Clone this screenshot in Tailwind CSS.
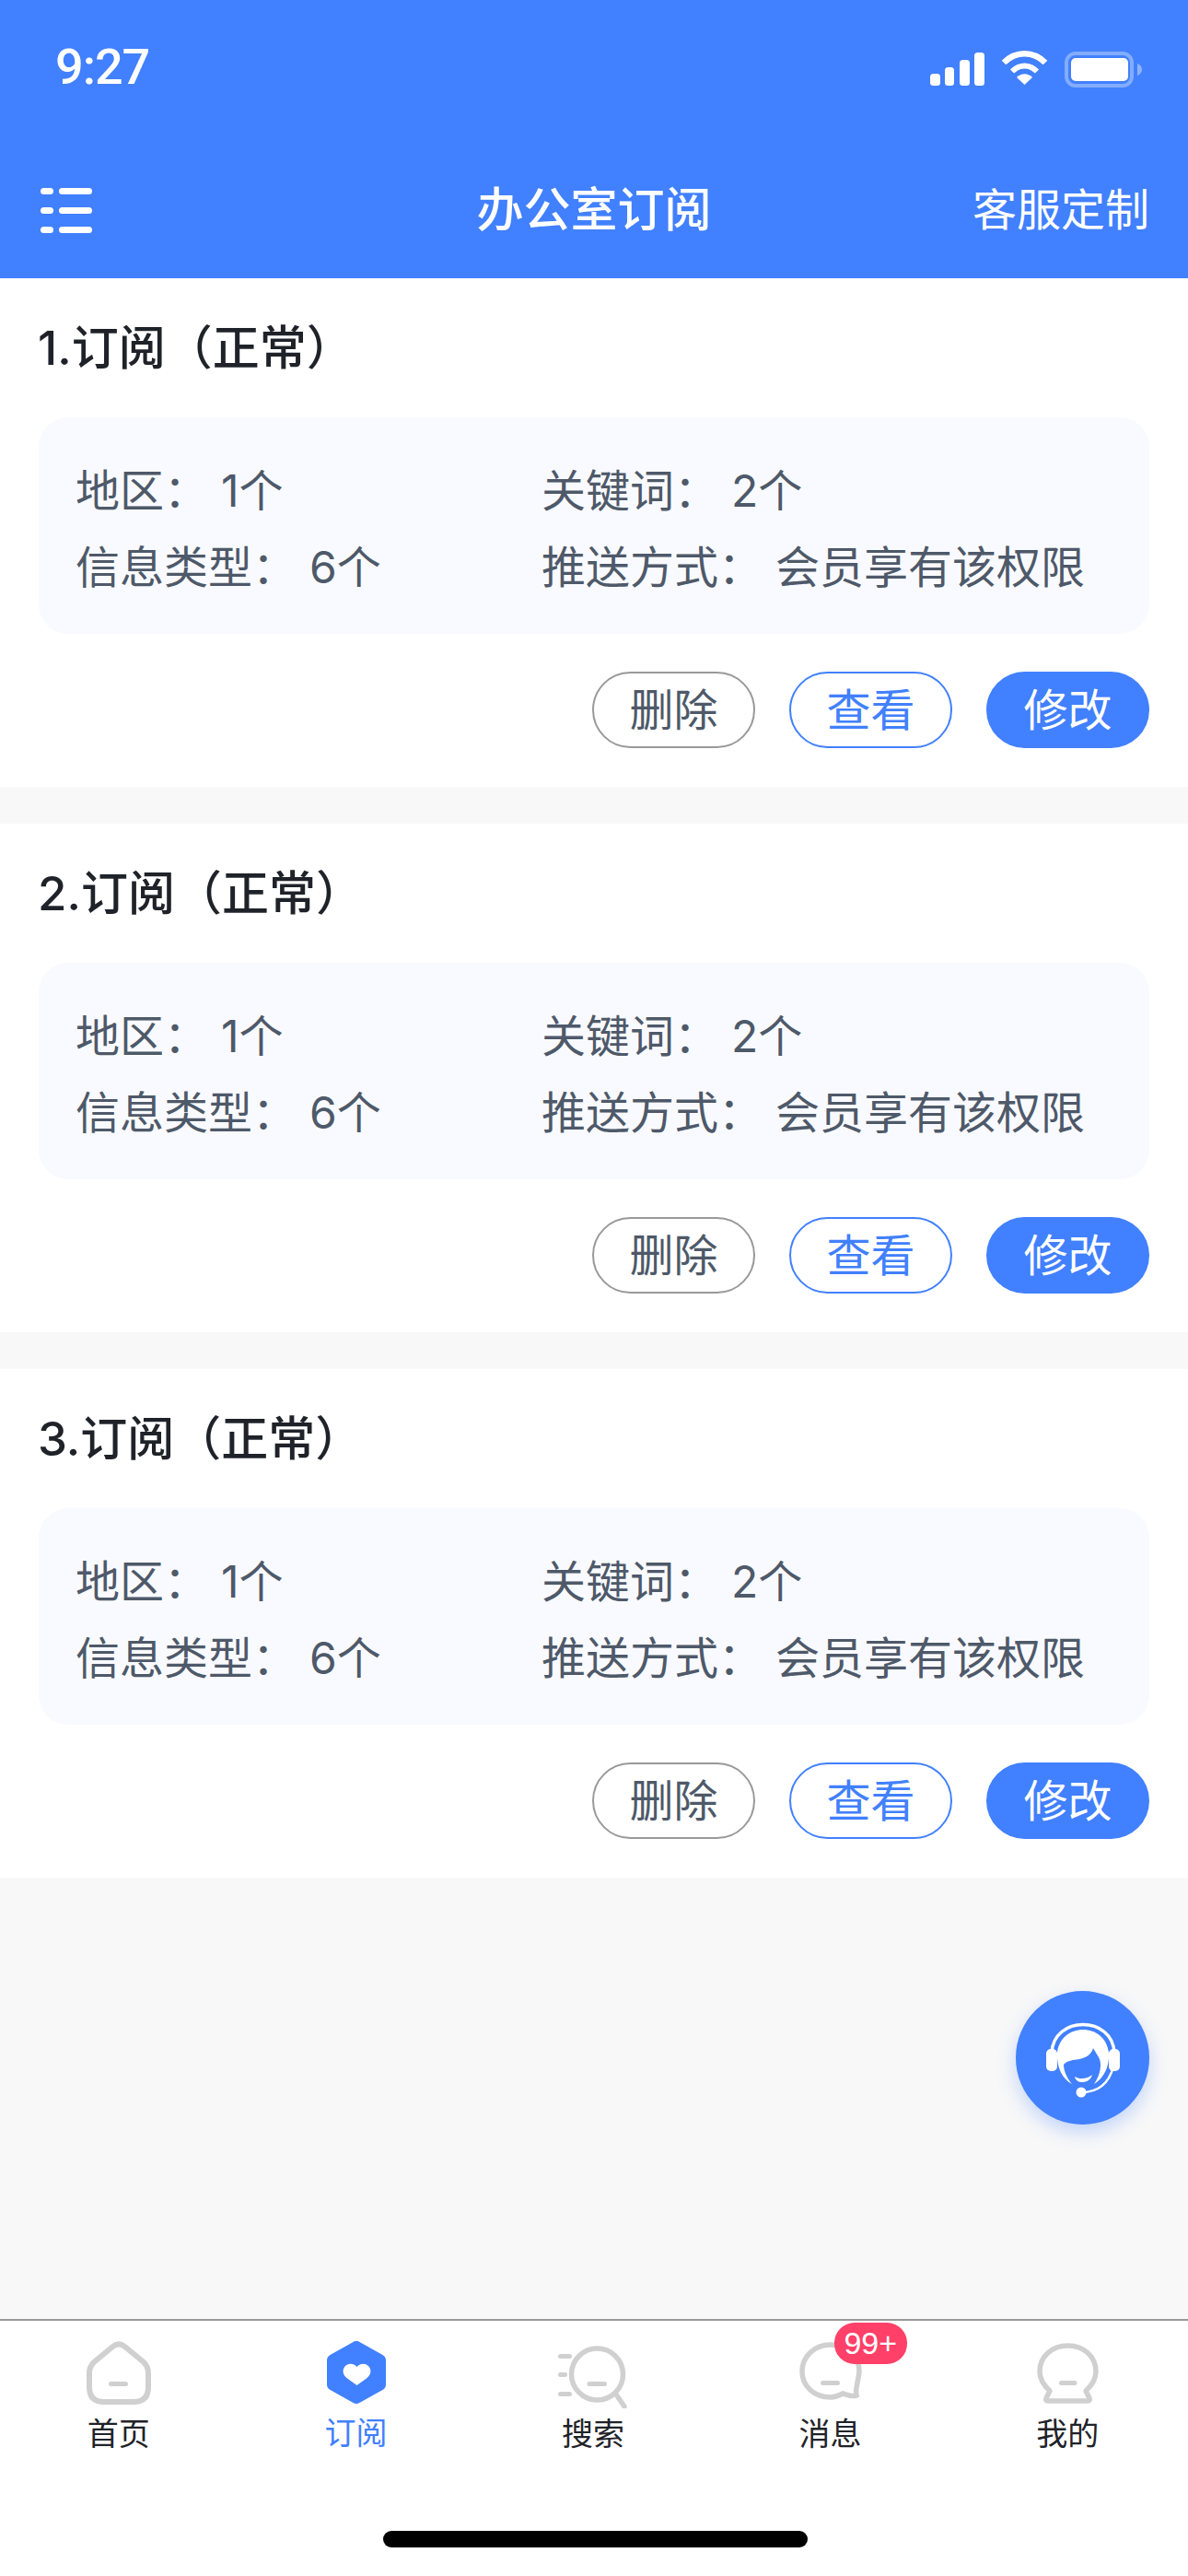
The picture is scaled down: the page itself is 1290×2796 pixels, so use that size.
<!DOCTYPE html>
<html lang="zh-CN">
<head>
  <meta charset="UTF-8">
  <meta name="viewport" content="width=device-width, initial-scale=1.0">
  <title>办公室订阅</title>
  <script src="https://cdn.jsdelivr.net/npm/@tailwindcss/browser@4"></script>
</head>
<body>
  <div class="relative flex h-[2796px] w-[1290px] flex-col overflow-hidden bg-[#f8f8f8] font-['Inter','Noto_Sans_CJK_SC',sans-serif]">

    <!-- Header -->
    <header class="flex h-[302px] flex-col bg-[#4180ff] text-white">
      <div class="flex h-[146px] items-start justify-between pt-[54px] pr-[50px] pl-[60px]">
        <span class="font-['Roboto',sans-serif] text-[54px] leading-[38px] font-medium tracking-[-1px]">9:27</span>
        <div class="flex items-start">
          <svg class="mt-[3px] h-[36px] w-[59px]" viewBox="0 0 59 36" fill="#fff">
            <rect x="0" y="23" width="11" height="13" rx="3.5"/>
            <rect x="16" y="16" width="10" height="20" rx="3.5"/>
            <rect x="32" y="8" width="11" height="28" rx="3.5"/>
            <rect x="48" y="0" width="11" height="36" rx="3.5"/>
          </svg>
          <svg class="ml-[17px] h-[38px] w-[53px]" viewBox="0 0 53 38" fill="none">
            <path d="M4 14C17 1 36 1 49 14" stroke="#fff" stroke-width="6.5"/>
            <path d="M13 23.5C21 15.5 32 15.5 40 23.5" stroke="#fff" stroke-width="6"/>
            <path d="M26.5 38L18 30C23 25 30 25 35 30Z" fill="#fff"/>
          </svg>
          <svg class="mt-[2px] ml-[17px] h-[39px] w-[84px]" viewBox="0 0 84 39" fill="none">
            <rect x="2" y="2" width="71" height="35" rx="10" stroke="#fff" stroke-opacity="0.35" stroke-width="4"/>
            <rect x="7" y="7" width="62" height="25" rx="5" fill="#fff"/>
            <path d="M79 13C82 14 84 16.5 84 19.5C84 22.5 82 25 79 26Z" fill="#fff" fill-opacity="0.4"/>
          </svg>
        </div>
      </div>
      <div class="grid grid-cols-[1fr_auto_1fr] items-center px-[44px] pt-[47px]">
        <div class="grid w-[56px] grid-cols-[14px_36px] gap-x-[6px] gap-y-[14px]">
          <span class="h-[7px] rounded-full bg-white"></span><span class="h-[7px] rounded-full bg-white"></span>
          <span class="h-[7px] rounded-full bg-white"></span><span class="h-[7px] rounded-full bg-white"></span>
          <span class="h-[7px] rounded-full bg-white"></span><span class="h-[7px] rounded-full bg-white"></span>
        </div>
        <h1 class="text-[51px] leading-[70px] font-medium">办公室订阅</h1>
        <a class="-mr-[2px] text-right text-[48px] leading-[70px]">客服定制</a>
      </div>
    </header>

    <!-- Subscription list -->
    <main class="flex flex-1 flex-col gap-[40px]">
      <section class="h-[552px] bg-white px-[42px] pt-[40px]">
        <h2 class="-ml-[1px] text-[51px] leading-[72px] font-medium text-[#1f2329]">1.订阅（正常）</h2>
        <div class="mt-[39px] grid h-[235px] grid-cols-[506px_1fr] content-center gap-y-[1px] rounded-[32px] bg-[#f9faff] px-[40px] pt-[8px] text-[48px] leading-[82px] text-[#4e5969]">
          <div>地区：<span class="ml-[14px]">1个</span></div>
          <div>关键词：<span class="ml-[14px]">2个</span></div>
          <div>信息类型：<span class="ml-[14px]">6个</span></div>
          <div>推送方式：<span class="ml-[14px]">会员享有该权限</span></div>
        </div>
        <div class="mt-[41px] flex justify-end gap-[37px] text-[48px]">
          <button class="h-[83px] w-[177px] rounded-full border-2 border-[#999999] text-[#4e5969]">删除</button>
          <button class="h-[83px] w-[177px] rounded-full border-2 border-[#4180ff] text-[#4180ff]">查看</button>
          <button class="h-[83px] w-[177px] rounded-full bg-[#4180ff] text-white">修改</button>
        </div>
      </section>

      <section class="h-[552px] bg-white px-[42px] pt-[40px]">
        <h2 class="-ml-[1px] text-[51px] leading-[72px] font-medium text-[#1f2329]">2.订阅（正常）</h2>
        <div class="mt-[39px] grid h-[235px] grid-cols-[506px_1fr] content-center gap-y-[1px] rounded-[32px] bg-[#f9faff] px-[40px] pt-[8px] text-[48px] leading-[82px] text-[#4e5969]">
          <div>地区：<span class="ml-[14px]">1个</span></div>
          <div>关键词：<span class="ml-[14px]">2个</span></div>
          <div>信息类型：<span class="ml-[14px]">6个</span></div>
          <div>推送方式：<span class="ml-[14px]">会员享有该权限</span></div>
        </div>
        <div class="mt-[41px] flex justify-end gap-[37px] text-[48px]">
          <button class="h-[83px] w-[177px] rounded-full border-2 border-[#999999] text-[#4e5969]">删除</button>
          <button class="h-[83px] w-[177px] rounded-full border-2 border-[#4180ff] text-[#4180ff]">查看</button>
          <button class="h-[83px] w-[177px] rounded-full bg-[#4180ff] text-white">修改</button>
        </div>
      </section>

      <section class="h-[552px] bg-white px-[42px] pt-[40px]">
        <h2 class="-ml-[1px] text-[51px] leading-[72px] font-medium text-[#1f2329]">3.订阅（正常）</h2>
        <div class="mt-[39px] grid h-[235px] grid-cols-[506px_1fr] content-center gap-y-[1px] rounded-[32px] bg-[#f9faff] px-[40px] pt-[8px] text-[48px] leading-[82px] text-[#4e5969]">
          <div>地区：<span class="ml-[14px]">1个</span></div>
          <div>关键词：<span class="ml-[14px]">2个</span></div>
          <div>信息类型：<span class="ml-[14px]">6个</span></div>
          <div>推送方式：<span class="ml-[14px]">会员享有该权限</span></div>
        </div>
        <div class="mt-[41px] flex justify-end gap-[37px] text-[48px]">
          <button class="h-[83px] w-[177px] rounded-full border-2 border-[#999999] text-[#4e5969]">删除</button>
          <button class="h-[83px] w-[177px] rounded-full border-2 border-[#4180ff] text-[#4180ff]">查看</button>
          <button class="h-[83px] w-[177px] rounded-full bg-[#4180ff] text-white">修改</button>
        </div>
      </section>
    </main>

    <!-- Floating customer service button -->
    <button class="absolute top-[2161px] left-[1103px] h-[145px] w-[145px] rounded-full bg-[#4180ff] shadow-[0_8px_20px_rgba(65,128,255,0.3)]">
      <svg class="h-full w-full" viewBox="23 21 145 145" fill="none">
        <path d="M62 88C63 68 79 57.5 96 57.5C113 57.5 129 68 130 88" stroke="#fff" stroke-width="3.5"/>
        <rect x="56" y="84" width="12" height="24" rx="5" fill="#fff"/>
        <rect x="124" y="84" width="12" height="24" rx="5" fill="#fff"/>
        <path d="M68 88C70 72 82 63 96 63C110 63 122 72 124 88C125 104 118 116 108 122C115 112 117 100 113 93C111 90 109 86 107 83C105 90 100 93 92 95C84 96 78 97 75 101C75 108 79 116 84 122C74 117 67 104 68 88Z" fill="#fff"/>
        <path d="M87 114C92 117 100 117 106 112C104 119 98 120 95 120C91 120 88 118 87 114Z" fill="#fff"/>
        <path d="M94 131C112 131 124 122 129 103" stroke="#fff" stroke-width="2.5"/>
        <circle cx="94" cy="131" r="5.5" fill="#fff"/>
      </svg>
    </button>

    <!-- Tab bar -->
    <nav class="relative h-[279px] border-t-2 border-[#999999] bg-white">
      <div class="grid grid-cols-5 pr-[2px] text-center text-[34px] leading-[50px] text-[#1f2329]">
        <a class="flex flex-col items-center">
          <div class="flex h-[107px] items-end pb-[16px]">
            <svg class="h-[69px] w-[70px]" viewBox="0 0 70 69" fill="none" stroke="#d0d0d0" stroke-width="6">
              <path d="M28.5 6Q35 .8 41.5 6L61 22Q67 27 67 35V50Q67 66 51 66H19Q3 66 3 50V35Q3 27 9 22Z"/>
              <rect x="24" y="44" width="21" height="5" rx="2.5" fill="#d0d0d0" stroke="none"/>
            </svg>
          </div>
          <span class="-mt-[9px]">首页</span>
        </a>
        <a class="flex flex-col items-center text-[#4180ff]">
          <div class="ml-[2px] flex h-[107px] items-end pb-[17px]">
            <svg class="h-[68px] w-[64px]" viewBox="0 0 64 68" fill="#4180ff">
              <path d="M32 7L57 21V47L32 61L7 47V21Z" stroke="#4180ff" stroke-width="14" stroke-linejoin="round"/>
              <path d="M32.5 48L22 40.5C17 36.5 17 32 18.5 29C20.5 24.5 28 22.5 32.5 28C37 22.5 44.5 24.5 46.5 29C48 32 48 36.5 43 40.5Z" fill="#fff"/>
            </svg>
          </div>
          <span class="-mt-[10px]">订阅</span>
        </a>
        <a class="flex flex-col items-center">
          <div class="flex h-[107px] items-end pb-[12px]">
            <svg class="h-[68px] w-[75px]" viewBox="0 0 75 68" fill="none" stroke="#d0d0d0" stroke-width="5.5">
              <circle cx="42.5" cy="31" r="28"/>
              <path d="M63 53L72 66" stroke-linecap="round"/>
              <rect x="0" y="9" width="15" height="5" rx="2.5" fill="#d0d0d0" stroke="none"/>
              <rect x="0" y="29" width="10" height="5" rx="2.5" fill="#d0d0d0" stroke="none"/>
              <rect x="0" y="50" width="15" height="5" rx="2.5" fill="#d0d0d0" stroke="none"/>
              <rect x="31.5" y="39" width="21.5" height="5" rx="2.5" fill="#d0d0d0" stroke="none"/>
            </svg>
          </div>
          <span class="-mt-[9px]">搜索</span>
        </a>
        <a class="relative flex flex-col items-center">
          <div class="flex h-[107px] items-end pb-[20px]">
            <svg class="h-[64px] w-[68px]" viewBox="0 0 68 64" fill="none" stroke="#d0d0d0" stroke-width="5.5">
              <path d="M34 3C16 3 3 16 3 32C3 48 16 60 34 60C40 60 43 58 47 56C51 57 58 60 62 58C60 52 64 44 65 32C65 16 52 3 34 3Z"/>
              <rect x="23" y="42" width="21" height="5" rx="2.5" fill="#d0d0d0" stroke="none"/>
            </svg>
          </div>
          <span class="-mt-[9px]">消息</span>
          <span class="absolute top-[2px] left-[133px] h-[45px] w-[79px] rounded-[22px] bg-[#ff4068] font-['Liberation_Sans',sans-serif] text-[34px] leading-[45px] text-white">99+</span>
        </a>
        <a class="flex flex-col items-center">
          <div class="flex h-[107px] items-end pb-[17px]">
            <svg class="h-[66px] w-[67px]" viewBox="0 0 67 66" fill="none" stroke="#d0d0d0" stroke-width="5.5">
              <path d="M14 52C6 45 3 38 3 31C3 15 16 3 33.5 3C51 3 64 15 64 31C64 38 61 45 53 52L57 60Q58 63 55 63H12Q9 63 10 60Z" stroke-linejoin="round"/>
              <rect x="24" y="41" width="19.5" height="5" rx="2.5" fill="#d0d0d0" stroke="none"/>
            </svg>
          </div>
          <span class="-mt-[9px]">我的</span>
        </a>
      </div>
      <div class="absolute top-[228px] left-[416px] h-[18px] w-[461px] rounded-full bg-black"></div>
    </nav>
  </div>
</body>
</html>
